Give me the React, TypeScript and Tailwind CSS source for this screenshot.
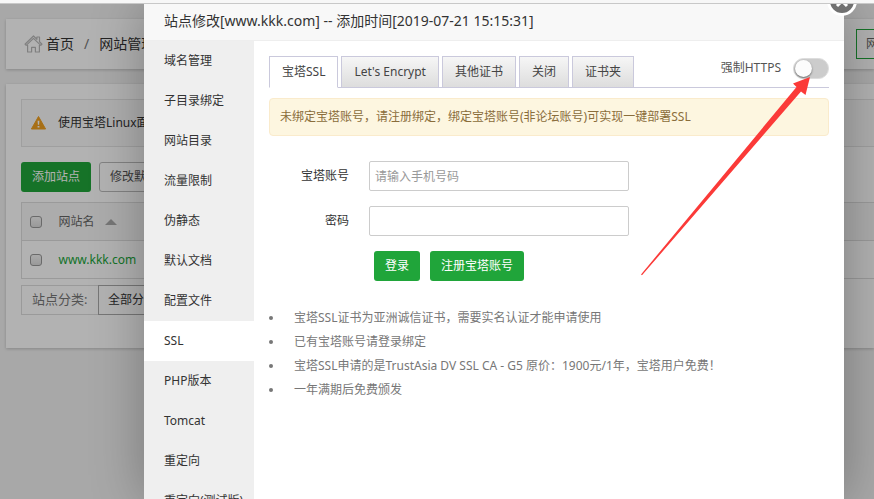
import { useState } from "react"
import { clsx } from "clsx"

const MENU = [
  "域名管理", "子目录绑定", "网站目录", "流量限制", "伪静态", "默认文档",
  "配置文件", "SSL", "PHP版本", "Tomcat", "重定向", "重定向(测试版)",
]
const TABS = ["宝塔SSL", "Let's Encrypt", "其他证书", "关闭", "证书夹"]
const NOTES = [
  "宝塔SSL证书为亚洲诚信证书，需要实名认证才能申请使用",
  "已有宝塔账号请登录绑定",
  "宝塔SSL申请的是TrustAsia DV SSL CA - G5 原价：1900元/1年，宝塔用户免费！",
  "一年满期后免费颁发",
]

function HomeIcon() {
  return (
    <svg className="h-[18px] w-[19px]" viewBox="0 0 19 18" fill="none" stroke="#b8b8b8" strokeWidth="1.2" strokeLinejoin="round">
      <path d="M1 9.2 9.5 1l3.4 3.3V2h2.6v4.8L18 9.2l-1.2 1.2L9.5 3.4 2.2 10.4z" />
      <path d="M3.6 10v7h4v-4.6h3.8V17h4v-7" />
    </svg>
  )
}

function WarnIcon() {
  return (
    <svg className="h-3.5 w-[15px]" viewBox="0 0 15 14">
      <path d="M7.5.5 14.6 13H.4z" fill="#f0a020" stroke="#f0a020" strokeLinejoin="round" />
      <path d="M6.6 4.8h1.8l-.3 4H6.9zM6.6 10h1.8v1.6H6.6z" fill="#fff" />
    </svg>
  )
}

function Check({ label }: { label: string }) {
  return (
    <input
      type="checkbox"
      aria-label={label}
      className="size-3 shrink-0 appearance-none rounded-[3px] border border-[#999] bg-linear-to-b from-[#f4f4f4] to-[#dcdcdc]"
    />
  )
}

function SiteList() {
  return (
    <div className="h-full overflow-hidden bg-[#f1f1f1] pt-[15px] pl-1.5">
      <header className="flex h-[50px] items-center bg-white pl-[18px] text-sm shadow-[0_1px_3px_rgba(0,0,0,0.2)]">
        <HomeIcon />
        <a href="#home" className="ml-[3px]">首页</a>
        <span className="mx-2.5 text-[#777]">/</span>
        <span>网站管理</span>
        <button className="-mr-3.5 ml-auto h-[30px] shrink-0 border border-[#20a53a] px-[9px] text-xs text-[#666]">网</button>
      </header>

      <main className="mt-[15px] h-[264px] bg-white pt-[15px] pl-[15px] shadow-[0_1px_3px_rgba(0,0,0,0.2)]">
        <div className="flex h-12 items-center gap-3 border border-r-0 border-[#e4e4e4] bg-[#fafafa] pl-[9px]">
          <WarnIcon />
          <span>使用宝塔Linux面板</span>
        </div>
        <div className="mt-[15px] flex gap-2">
          <button className="h-[30px] rounded-[3px] bg-[#20a53a] px-[11px] text-white">添加站点</button>
          <button className="h-[30px] rounded-[3px] border border-[#bbb] px-2.5 text-[#555]">修改默认页</button>
        </div>
        <table className="mt-2.5 w-full border-collapse border border-r-0 border-[#ddd] text-left">
          <thead>
            <tr className="h-[38px] border-b border-[#ddd] bg-[#f6f6f6] text-[#666]">
              <th className="w-[37px] pl-2 font-normal"><div className="flex"><Check label="全选" /></div></th>
              <th className="font-normal">
                <div className="flex items-center gap-2.5">
                  网站名
                  <svg className="h-1.5 w-3" viewBox="0 0 12 6"><path d="M0 6 6 0l6 6z" fill="#aaa" /></svg>
                </div>
              </th>
            </tr>
          </thead>
          <tbody>
            <tr className="h-[38px]">
              <td className="pl-2"><div className="flex"><Check label="www.kkk.com" /></div></td>
              <td><a href="#site" className="text-[#20a53a]">www.kkk.com</a></td>
            </tr>
          </tbody>
        </table>
        <div className="mt-1.5 flex h-[30px]">
          <span className="flex w-[77px] items-center border border-r-0 border-[#ddd] pl-2.5 text-[13px] text-[#777]">站点分类:</span>
          <button className="border border-[#aaa] px-[9px]">全部分类</button>
        </div>
      </main>
    </div>
  )
}

function ForceHttps() {
  return (
    <div className="ml-auto flex h-6 items-center gap-3">
      <label htmlFor="force" className="text-[#555]">强制HTTPS</label>
      <div className="relative flex">
        <input id="force" type="checkbox" role="switch" className="peer h-[21px] w-9 appearance-none rounded-full border border-[#ddd] bg-[#ccc]" />
        <span className="pointer-events-none absolute top-0.5 left-0.5 size-[17px] rounded-full bg-[#fcfcfc] shadow-[0_1px_2px_rgba(0,0,0,0.5)] peer-checked:left-4" />
        <svg className="pointer-events-none absolute top-[18px] right-[18px] z-10 h-[200px] w-[170px]" viewBox="0 0 170 200">
          <path d="M169 1 152 7.5 155.5 11 0 198.5 1 199.3 160 15.5 164.5 19z" fill="#fb3a38" />
        </svg>
      </div>
    </div>
  )
}

function SslPanel() {
  const [tab, setTab] = useState(TABS[0])
  return (
    <section className="min-w-0 flex-1 bg-white p-[15px]">
      <div className="flex border-b border-[#cac9dc]">
        <div role="tablist" className="-mb-px flex shrink-0 gap-[3px]">
          {TABS.map((t) => (
            <button
              key={t}
              role="tab"
              aria-selected={t === tab}
              onClick={() => setTab(t)}
              className={clsx(
                "h-8 border border-[#cac9dc] px-3 text-[#444]",
                t === tab ? "border-b-white bg-white" : "bg-linear-to-b from-[#f6f6f6] to-[#dddddd]",
              )}
            >
              {t}
            </button>
          ))}
        </div>
        <ForceHttps />
      </div>

      <p className="mt-2.5 flex h-[38px] items-center rounded border border-[#faebcc] bg-[#fdf6e0] px-2.5 text-[#8a6d3b]">
        未绑定宝塔账号，请注册绑定，绑定宝塔账号(非论坛账号)可实现一键部署SSL
      </p>

      <form className="mt-[25px]" onSubmit={(e) => e.preventDefault()}>
        <div className="flex items-center gap-5">
          <label htmlFor="account" className="w-20 text-right">宝塔账号</label>
          <input id="account" placeholder="请输入手机号码" className="h-[30px] w-[260px] rounded-xs border border-[#ccc] px-[5px] placeholder:text-[#999]" />
        </div>
        <div className="mt-[15px] flex items-center gap-5">
          <label htmlFor="password" className="w-20 text-right">密码</label>
          <input id="password" type="password" className="h-[30px] w-[260px] rounded-xs border border-[#ccc] px-[5px]" />
        </div>
        <div className="mt-[15px] ml-[105px] flex gap-2.5">
          <button className="h-[30px] rounded-[3px] bg-[#20a53a] px-[11px] text-white">登录</button>
          <button type="button" className="h-[30px] rounded-[3px] bg-[#20a53a] px-[11px] text-white">注册宝塔账号</button>
        </div>
      </form>

      <ul className="mt-[25px] leading-6 text-[#777]">
        {NOTES.map((n) => (
          <li key={n} className="flex items-center">
            <span className="mr-[21px] size-1 rounded-full bg-[#777]" />
            {n}
          </li>
        ))}
      </ul>
    </section>
  )
}

export default function App() {
  const [menu, setMenu] = useState("SSL")
  return (
    <div className="flex h-screen flex-col overflow-hidden font-['Noto_Sans','Noto_Sans_CJK_SC',sans-serif] text-xs text-[#333]">
      <div className="h-1 shrink-0 border-b border-[#c8c8c8] bg-[#f7f7f7]" />
      <div className="relative min-h-0 flex-1 overflow-hidden">
        <SiteList />
        <div className="absolute inset-0 flex bg-black/30 pr-[30px] pl-36">
          <div role="dialog" aria-label="站点修改" className="relative flex min-w-0 flex-1 flex-col bg-white shadow-[1px_1px_50px_rgba(0,0,0,0.3)]">
            <h2 className="h-[37px] shrink-0 border-b border-[#eee] bg-[#f8f8f8] px-5 text-sm leading-[34px]">
              站点修改[www.kkk.com] -- 添加时间[2019-07-21 15:15:31]
            </h2>
            <button aria-label="关闭窗口" className="absolute -top-[18px] -right-[13px] size-[30px] rounded-full border-3 border-white bg-[#707070]">
              <svg className="size-6" viewBox="0 0 24 24" stroke="#fff" strokeWidth="3"><path d="m7 7 10 10M17 7 7 17" /></svg>
            </button>
            <div className="flex min-h-0 flex-1">
              <nav className="w-[110px] shrink-0 overflow-hidden bg-[#efefef]">
                {MENU.map((m) => (
                  <button
                    key={m}
                    onClick={() => setMenu(m)}
                    className={clsx("block h-10 w-full pl-5 text-left whitespace-nowrap", m === menu && "bg-white")}
                  >
                    {m}
                  </button>
                ))}
              </nav>
              <SslPanel />
            </div>
          </div>
        </div>
      </div>
    </div>
  )
}
